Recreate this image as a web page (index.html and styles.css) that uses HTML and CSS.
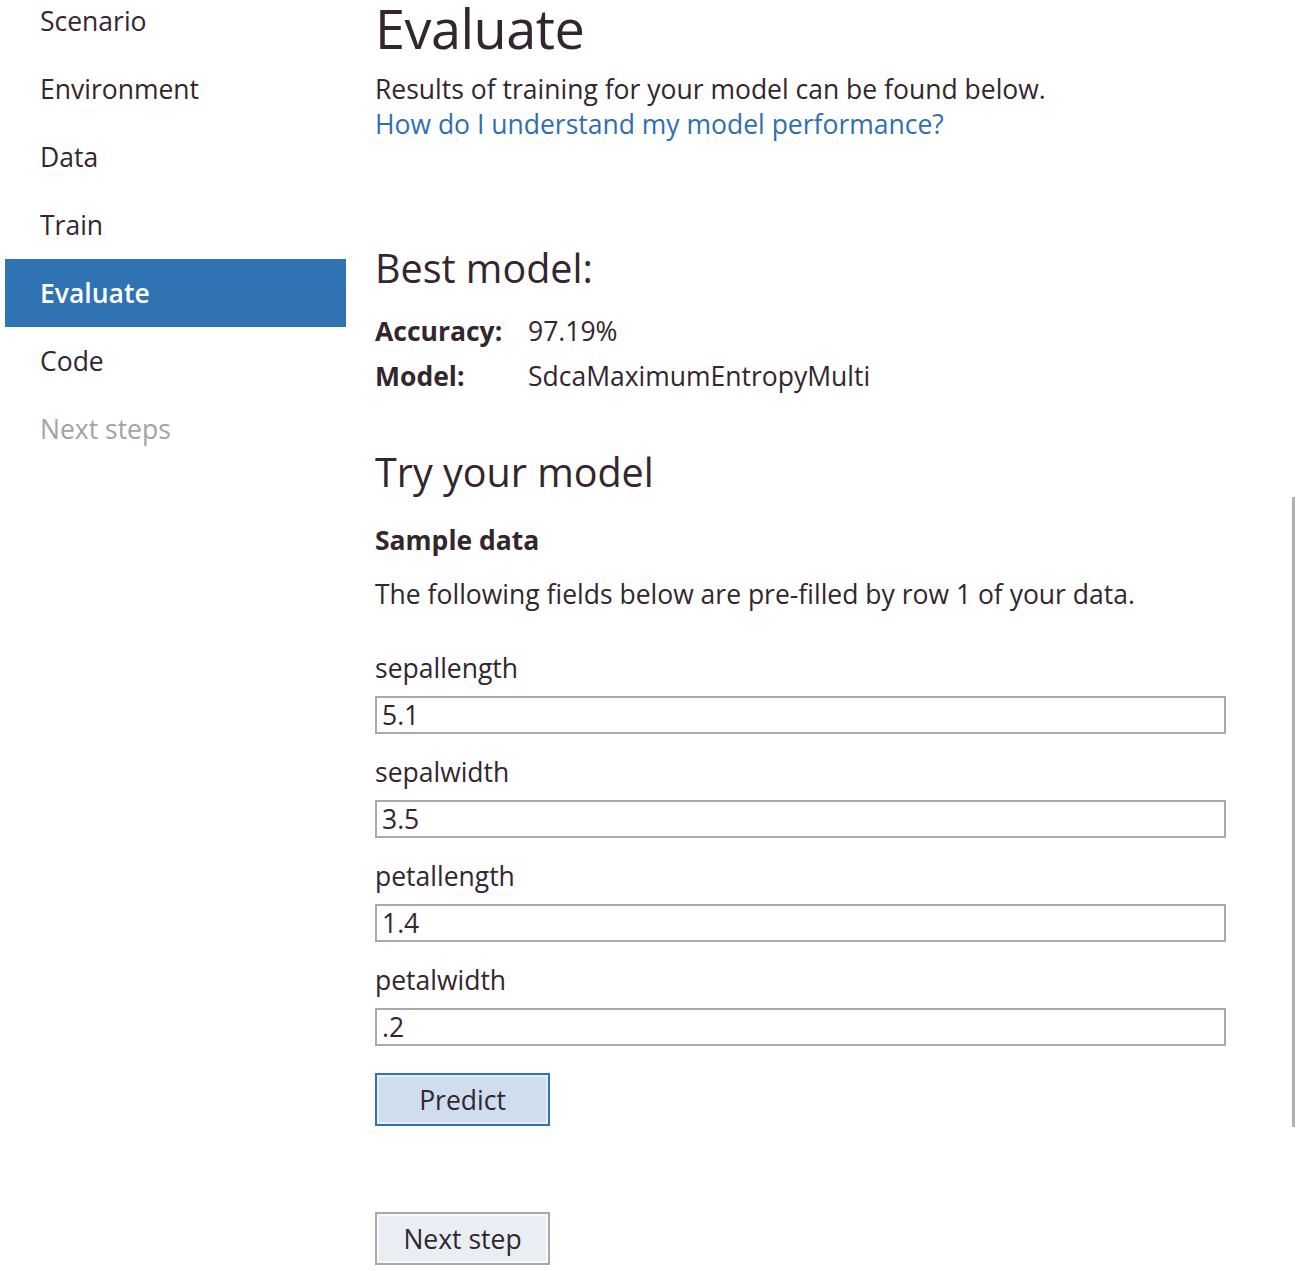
FILE: index.html
```html
<!DOCTYPE html>
<html lang="en">
<head>
<meta charset="utf-8">
<title>Evaluate</title>
<link rel="stylesheet" href="styles.css">
</head>
<body>
<div class="app">
  <nav class="sidebar">
    <div class="nav-item">Scenario</div>
    <div class="nav-item">Environment</div>
    <div class="nav-item">Data</div>
    <div class="nav-item">Train</div>
    <div class="nav-item active">Evaluate</div>
    <div class="nav-item">Code</div>
    <div class="nav-item disabled">Next steps</div>
  </nav>
  <main class="main">
    <h1 class="title">Evaluate</h1>
    <p class="text intro">Results of training for your model can be found below.</p>
    <a class="text link" href="#">How do I understand my model performance?</a>

    <h2 class="heading best">Best model:</h2>
    <div class="stat"><span class="stat-label">Accuracy:</span><span class="stat-value">97.19%</span></div>
    <div class="stat"><span class="stat-label">Model:</span><span class="stat-value">SdcaMaximumEntropyMulti</span></div>

    <h2 class="heading try">Try your model</h2>
    <div class="text bold sample">Sample data</div>
    <p class="text desc">The following fields below are pre-filled by row 1 of your data.</p>

    <div class="fields">
      <div class="field">
        <label class="text">sepallength</label>
        <input class="input" type="text" value="5.1">
      </div>
      <div class="field">
        <label class="text">sepalwidth</label>
        <input class="input" type="text" value="3.5">
      </div>
      <div class="field">
        <label class="text">petallength</label>
        <input class="input" type="text" value="1.4">
      </div>
      <div class="field">
        <label class="text">petalwidth</label>
        <input class="input" type="text" value=".2">
      </div>
    </div>

    <button class="btn btn-primary" type="button">Predict</button>
    <button class="btn btn-next" type="button">Next step</button>
  </main>
  <div class="scroll-edge"></div>
</div>
</body>
</html>
```
FILE: styles.css
```css
html, body {
  margin: 0;
  padding: 0;
  background: #ffffff;
  overflow: hidden;
}
body {
  font-family: "Open Sans", "Noto Sans", "Liberation Sans", sans-serif;
  color: #33262f;
}
.app {
  display: flex;
  align-items: flex-start;
  position: relative;
  height: 1271px;
}
.sidebar {
  width: 341px;
  margin-left: 5px;
  margin-top: -13px;
  display: flex;
  flex-direction: column;
}
.nav-item {
  height: 68px;
  line-height: 68px;
  padding-left: 35px;
  font-size: 26.5px;
  color: #33262f;
}
.nav-item.active {
  background: #2f73b2;
  color: #ffffff;
  font-weight: 600;
}
.nav-item.disabled {
  color: #a3a3a3;
}
.main {
  padding-left: 29px;
  display: flex;
  flex-direction: column;
  align-items: flex-start;
  flex: 1;
}
.title {
  margin: 0;
  font-size: 54px;
  font-weight: 400;
  line-height: 56px;
  letter-spacing: -0.5px;
}
.text {
  font-size: 26.5px;
  line-height: 35px;
  margin: 0;
}
.intro {
  margin-top: 16px;
}
.link {
  color: #2f6fb0;
  text-decoration: none;
}
.heading {
  margin: 0;
  font-size: 39.5px;
  font-weight: 400;
  line-height: 50px;
}
.best {
  margin-top: 101px;
}
.stat {
  display: flex;
  font-size: 26.5px;
  line-height: 45px;
}
.best + .stat {
  margin-top: 16px;
}
.stat-label {
  width: 153px;
  font-weight: 700;
}
.try {
  margin-top: 48px;
}
.bold {
  font-weight: 700;
}
.sample {
  margin-top: 26px;
}
.desc {
  margin-top: 19px;
}
.fields {
  margin-top: 39px;
  display: flex;
  flex-direction: column;
  width: 851px;
}
.field {
  display: flex;
  flex-direction: column;
  padding-bottom: 21px;
}
.field label {
  margin-bottom: 10px;
}
.input {
  box-sizing: border-box;
  height: 38px;
  width: 851px;
  border: 2px solid #a9a9a9;
  border-radius: 0;
  padding: 0 5px;
  font-family: inherit;
  font-size: 26.5px;
  color: #33262f;
  background: #ffffff;
  outline: none;
}
.btn {
  box-sizing: border-box;
  width: 175px;
  height: 53px;
  font-family: inherit;
  font-size: 26.5px;
  color: #33262f;
  padding: 0;
}
.btn-primary {
  margin-top: 6px;
  background: #cfdeef;
  border: 2px solid #2f73b2;
  box-shadow: inset 0 0 0 2px #e6eef8;
}
.btn-next {
  margin-top: 86px;
  background: #e9eef4;
  border: 2px solid #a9a9a9;
  box-shadow: inset 0 0 0 2px #f7f9fb;
}
.scroll-edge {
  position: absolute;
  left: 1292px;
  top: 497px;
  width: 3px;
  height: 630px;
  background: #b0b0b0;
}
```
